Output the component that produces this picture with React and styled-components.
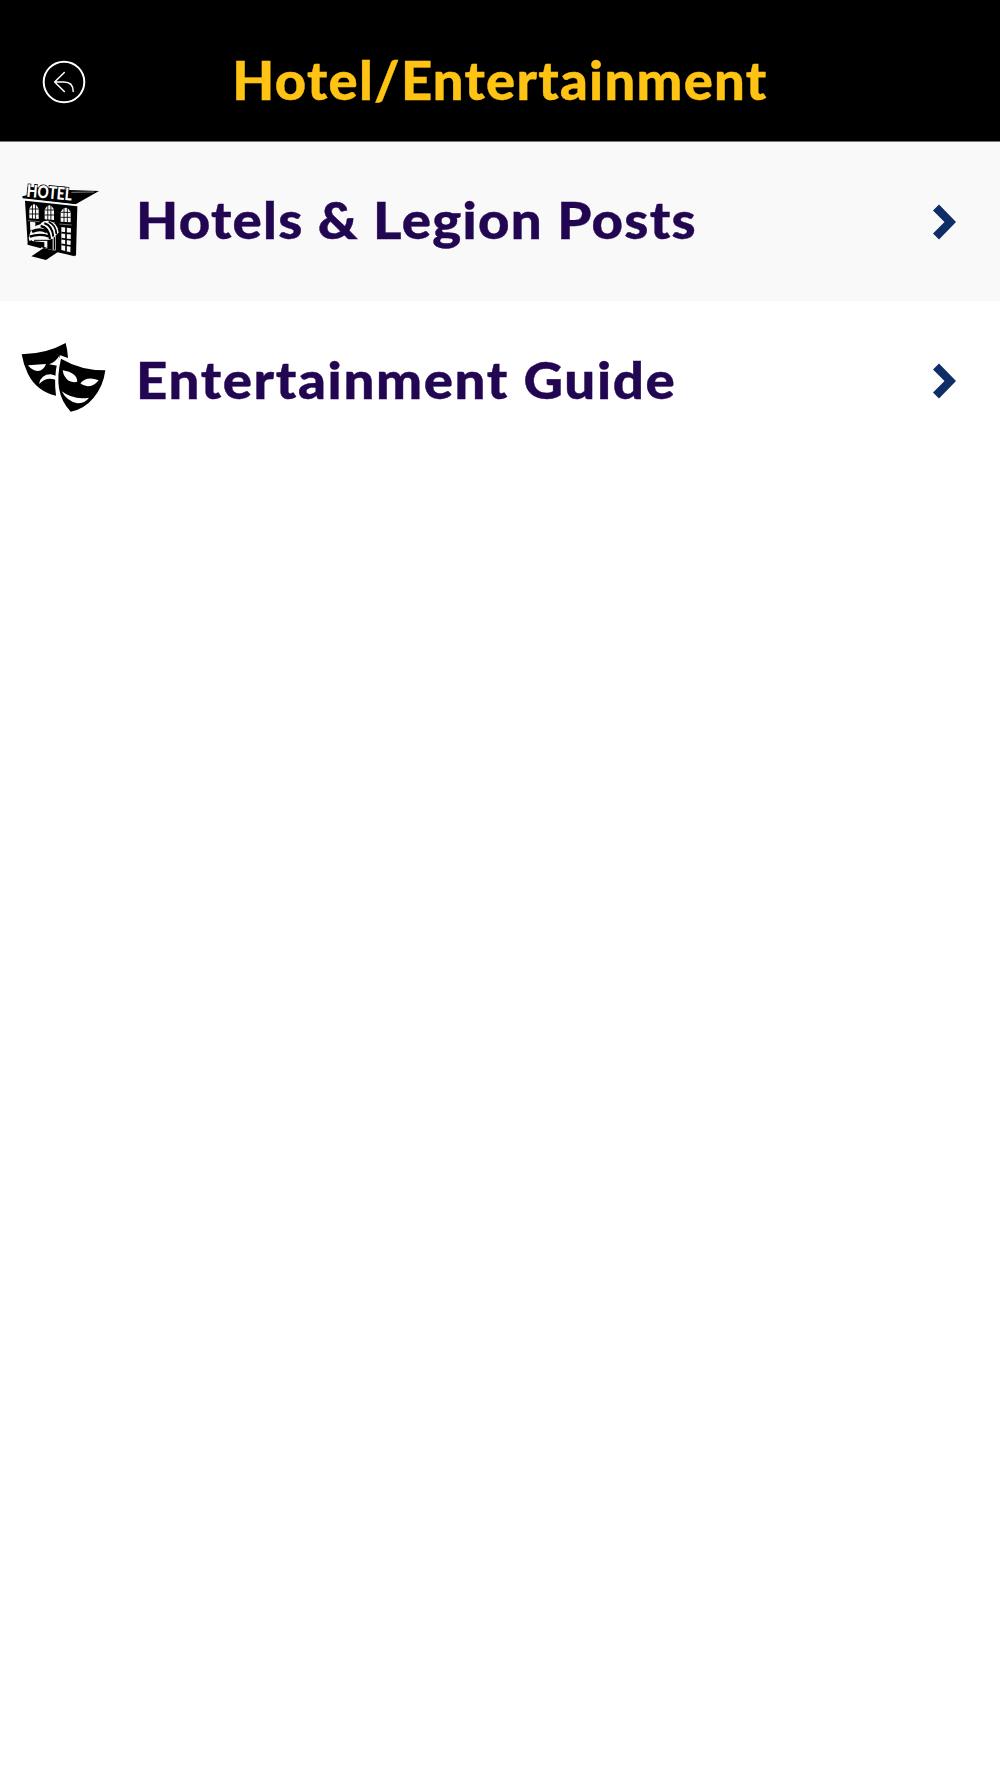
import React from 'react';
import styled, { createGlobalStyle } from 'styled-components';

const GlobalStyle = createGlobalStyle`
  body {
    margin: 0;
    background: #fff;
    font-family: Lato, "Open Sans", sans-serif;
  }
`;

const Screen = styled.div`
  min-height: 1778px;
  display: flex;
  flex-direction: column;
  background: #fff;
`;

const Header = styled.header`
  box-sizing: border-box;
  height: 142px;
  padding: 22px 42px 0;
  display: grid;
  grid-template-columns: 44px 1fr 44px;
  align-items: center;
  background: #000;
  border-bottom: 1px solid #777;
`;

const BackButton = styled.button`
  padding: 0;
  border: 0;
  background: none;
  display: flex;
`;

const Title = styled.h1`
  margin: 0;
  padding-bottom: 3px;
  text-align: center;
  white-space: nowrap;
  color: #ffc314;
  font-size: 53px;
  line-height: 64px;
  font-weight: 900;
  letter-spacing: 1.25px;
  -webkit-text-stroke: 0.4px #ffc314;
  transform: scaleX(1.025);
`;

const Menu = styled.nav`
  display: flex;
  flex-direction: column;
`;

const Row = styled.a`
  box-sizing: border-box;
  height: ${(p) => (p.$shaded ? 159 : 160)}px;
  padding: 0 44px 0 10px;
  display: flex;
  align-items: center;
  background: ${(p) => (p.$shaded ? '#f9f9f9' : '#fff')};
`;

const IconSlot = styled.span`
  width: 126px;
  flex: none;
  display: flex;
  padding-bottom: ${(p) => p.$lift}px;
`;

const Label = styled.span`
  flex: 1;
  padding-bottom: 5px;
  white-space: nowrap;
  color: #220652;
  font-size: 52px;
  line-height: 64px;
  font-weight: 900;
  letter-spacing: ${(p) => p.$tracking}px;
  -webkit-text-stroke: 0.4px #220652;
  transform: scaleX(1.05);
  transform-origin: left center;
`;

const BackIcon = () => (
  <svg width="44" height="44" viewBox="0 0 44 44" fill="none" stroke="#fff">
    <circle cx="22" cy="22" r="20.3" strokeWidth="2" />
    <path d="M22.3 12.5 12.6 22 22.3 31.5M12.6 22H22C28 22 31.2 25.5 31.2 31.5" strokeWidth="1.5" strokeLinecap="round" strokeLinejoin="round" />
  </svg>
);

const Chevron = () => (
  <svg width="23" height="36" viewBox="0 0 23 36">
    <path d="M6 .5 23 18 6 35.5 0 29.5 11.5 18 0 6.5Z" fill="#0f2d66" />
  </svg>
);

const windows = [
  [58, 103, 28, 42],
  [104, 106, 28, 42],
  [152, 113, 30, 42],
];

const HotelIcon = () => (
  <svg width="100" height="100" viewBox="0 0 300 300">
    <path d="M37 79 50 76 52 50 180 60 267 63 197 103 38 85Z" />
    <path d="M184 67 252 66" stroke="#f9f9f9" strokeWidth="1.5" />
    <path d="M42 88 196 105" stroke="#f9f9f9" strokeWidth="3" />
    <path d="M45 92 202 109 198 257 142 244 53 222Z" />
    {windows.map(([x, y, w, h]) => (
      <g key={x}>
        <path d={`M${x} ${y + h}V${y + 13}Q${x + w / 2} ${y - 13} ${x + w} ${y + 13}V${y + h + 2}Z`} fill="#f9f9f9" />
        <path
          d={`M${x + w / 3} ${y - 2}V${y + h + 2}M${x + (2 * w) / 3} ${y - 2}V${y + h + 2}M${x} ${y + 14}H${x + w}M${x} ${y + 29}H${x + w}`}
          stroke="#000"
          strokeWidth="2.6"
        />
        <path d={`M${x - 4} ${y + h + 7}l${w + 7} 3`} stroke="#e0e0e0" strokeWidth="1.5" />
      </g>
    ))}
    <path d="M60 155 76 157V172L61 182ZM154 171 183 175 181 247 154 240Z" fill="#f9f9f9" />
    <path d="M168 170V244M154 188l30 3M154 206l30 4M154 223l30 5" stroke="#000" strokeWidth="5" />
    <path d="M56 203Q62 169 91 163Q97 151 114 152Q143 155 146 188L137 196V241L128 239V206L112 211V234L103 231V217L58 212Z" fill="#f9f9f9" />
    <g fill="none" stroke="#000">
      <path d="M66 185Q92 173 111 186" strokeWidth="9" />
      <path d="M59 200Q88 190 116 199" strokeWidth="7" />
      <path d="M72 211H114" strokeWidth="3" />
      <path d="M92 168Q116 172 120 207" strokeWidth="7" />
      <path d="M103 160Q127 167 130 200" strokeWidth="6" />
      <path d="M116 155Q138 165 139 192" strokeWidth="5" />
      <path d="M64 211V219L101 226M119 211V236M133 202V239" strokeWidth="4" />
      <path d="M53 222 93 232M137 243 194 256" strokeWidth="5" />
    </g>
    <path d="M101 234 145 245 108 270 64 259Z" />
    <text
      transform="translate(49 80) rotate(5)"
      fontFamily="Lato, sans-serif"
      fontWeight="900"
      fontSize="52"
      textLength="136"
      lengthAdjust="spacingAndGlyphs"
      fill="#fff"
      stroke="#000"
      strokeWidth="5"
      paintOrder="stroke"
    >
      HOTEL
    </text>
  </svg>
);

const MasksIcon = () => (
  <svg width="110" height="90" viewBox="0 0 330 270">
    <path d="M35 73Q108 72 167 39Q173 61 174 84L151 76L142 97Q131 145 138 197Q80 184 54 132Q40 104 35 73Z" />
    <path d="M54 106 108 102Q101 122 83 123Q66 122 54 106ZM117 103Q139 95 149 75L142 107ZM87 162Q93 133 122 133Q134 134 143 142L142 151Q111 137 87 162Z" fill="#fff" />
    <path d="M153 86Q212 121 286 121Q280 169 251 203Q223 237 182 245Q154 216 147 175Q141 136 153 86Z" />
    <path d="M158 121Q201 128 202 155Q190 159 176 152Q161 142 158 121ZM211 160Q230 137 266 151Q252 169 233 169Q220 168 211 160ZM155 184Q191 211 237 203Q225 220 202 220Q171 214 155 184Z" fill="#fff" />
  </svg>
);

const items = [
  { label: 'Hotels & Legion Posts', Icon: HotelIcon, shaded: true, tracking: 1.2, lift: 3 },
  { label: 'Entertainment Guide', Icon: MasksIcon, shaded: false, tracking: 1.55, lift: 12 },
];

export default function App() {
  return (
    <Screen>
      <GlobalStyle />
      <Header>
        <BackButton aria-label="Back">
          <BackIcon />
        </BackButton>
        <Title>Hotel/Entertainment</Title>
      </Header>
      <Menu>
        {items.map(({ label, Icon, shaded, tracking, lift }) => (
          <Row key={label} $shaded={shaded}>
            <IconSlot $lift={lift}>
              <Icon />
            </IconSlot>
            <Label $tracking={tracking}>{label}</Label>
            <Chevron />
          </Row>
        ))}
      </Menu>
    </Screen>
  );
}
